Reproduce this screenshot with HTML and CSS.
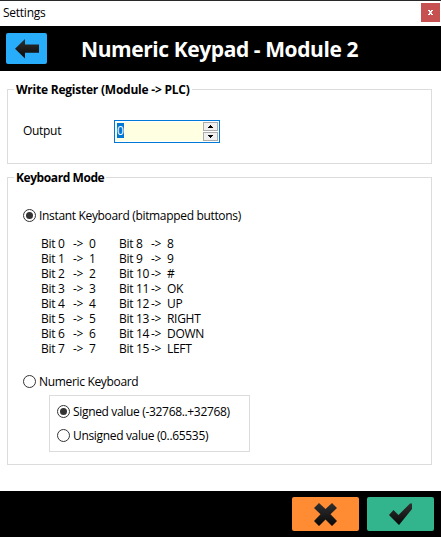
FILE: index.html
```html
<!DOCTYPE html>
<html lang="en">
<head>
<meta charset="utf-8">
<title>Settings</title>
<link rel="stylesheet" href="styles.css">
</head>
<body>
<div class="window">
  <div class="titlebar"><span class="caption">Settings</span><button class="close" aria-label="Close"><svg width="5" height="5" viewBox="0 0 5 5"><path d="M0 0h2v1h1V0h2v1H4v1H3.500v1H4v1h1v1H3V4H2v1H0V4h1V3h.5V2H1V1H0z" fill="#fff"/></svg></button></div>
  <header class="header">
    <button class="back" aria-label="Back"><svg width="41" height="31" viewBox="0 0 41 31"><defs><linearGradient id="ink" x1="0" y1="0" x2="0" y2="1"><stop offset="0" stop-color="#303030"/><stop offset="1" stop-color="#080808"/></linearGradient></defs><path d="M9 15.700L19 6v5.500h14v8.300H19v5.700z" fill="url(#ink)"/></svg></button>
    <h1 class="heading">Numeric Keypad - Module 2</h1>
  </header>
  <main class="content">
    <fieldset class="group register">
      <legend class="bold write">Write Register (Module -&gt; PLC)</legend>
      <div class="output">
        <span class="output-label">Output</span>
        <div class="spin">
          <div class="value"><span class="selected">0</span></div>
          <div class="arrows">
            <span class="step"><svg width="5" height="3" viewBox="0 0 5 3"><path d="M2 0h1v1h1v1h1v1H0V2h1V1h1z"/></svg></span>
            <span class="step"><svg width="5" height="3" viewBox="0 0 5 3"><path d="M0 0h5v1H4v1H3v1H2V2H1V1H0z"/></svg></span>
          </div>
        </div>
      </div>
    </fieldset>
    <fieldset class="group mode">
      <legend class="bold keyboard">Keyboard Mode</legend>
      <div class="option"><span class="radio on"></span><span class="instant">Instant Keyboard (bitmapped buttons)</span></div>
      <div class="bits">
        <span>Bit 0</span><span>-&gt;</span><span>0</span><span>Bit 8</span><span>-&gt;</span><span>8</span>
        <span>Bit 1</span><span>-&gt;</span><span>1</span><span>Bit 9</span><span>-&gt;</span><span>9</span>
        <span>Bit 2</span><span>-&gt;</span><span>2</span><span>Bit 10</span><span>-&gt;</span><span>#</span>
        <span>Bit 3</span><span>-&gt;</span><span>3</span><span>Bit 11</span><span>-&gt;</span><span>OK</span>
        <span>Bit 4</span><span>-&gt;</span><span>4</span><span>Bit 12</span><span>-&gt;</span><span>UP</span>
        <span>Bit 5</span><span>-&gt;</span><span>5</span><span>Bit 13</span><span>-&gt;</span><span>RIGHT</span>
        <span>Bit 6</span><span>-&gt;</span><span>6</span><span>Bit 14</span><span>-&gt;</span><span>DOWN</span>
        <span>Bit 7</span><span>-&gt;</span><span>7</span><span>Bit 15</span><span>-&gt;</span><span>LEFT</span>
      </div>
      <div class="option"><span class="radio"></span><span class="numeric">Numeric Keyboard</span></div>
      <div class="panel">
        <div class="option"><span class="radio on"></span><span class="signed">Signed value (-32768..+32768)</span></div>
        <div class="option"><span class="radio"></span><span class="unsigned">Unsigned value (0..65535)</span></div>
      </div>
    </fieldset>
  </main>
  <footer class="footer">
    <button class="action cancel" aria-label="Cancel"><svg width="67" height="34" viewBox="0 0 67 34"><path d="M27 6l6.500 6L40 6l5 5-6.500 6.300L45 24l-5 5-6.500-6.500L27 29l-5-5 6.500-6.700L22 11z" fill="url(#ink)"/></svg></button>
    <button class="action accept" aria-label="Accept"><svg width="67" height="34" viewBox="0 0 67 34"><path d="M22 18l4.500-5 5 5L43 6.500h2V12L32 28z" fill="url(#ink)"/></svg></button>
  </footer>
</div>
</body>
</html>
```
FILE: styles.css
```css
* { box-sizing: border-box; }
body { margin: 0; background: #fff; color: #000; font: 12px/15px "Open Sans", "Noto Sans", sans-serif; }
button { border: 0; padding: 0; margin: 0; }
svg { display: block; }
span { white-space: nowrap; }
.window { width: 441px; height: 537px; display: flex; flex-direction: column; background: #fff; border-top: 1px solid #2b2829; }
.titlebar { height: 25px; display: flex; justify-content: space-between; padding: 2px 1px 0 3px; }
.caption { padding-top: 2px; letter-spacing: -0.25px; }
.close { width: 19px; height: 19px; background: #c75050; display: flex; align-items: center; justify-content: center; }
.header { height: 45px; background: #000; display: flex; padding: 7px 6px; }
.back { width: 41px; height: 31px; background: #28adfb; border-radius: 2px; }
.heading { margin: 1px 0 0 34px; color: #fff; font-size: 21px; line-height: 30px; font-weight: 700; white-space: nowrap; letter-spacing: -0.42px; }
.content { flex: 1; padding: 11px 9px 0 7px; }
.group { margin: 0; min-width: 0; border: 1px solid #dcdcdc; padding: 0 15px; }
.register { height: 82px; margin-bottom: 6px; }
.mode { height: 295px; }
.group legend { height: 15px; margin-left: -9px; padding: 0 2px; white-space: nowrap; }
.bold { font-weight: 700; }
.write { letter-spacing: -0.23px; }
.keyboard { letter-spacing: -0.42px; }
.output { display: flex; align-items: center; height: 23px; margin-top: 23px; }
.output-label { width: 91px; letter-spacing: -0.3px; margin-top: -2px; }
.spin { width: 106px; height: 23px; border: 1px solid #0078d7; padding: 1px; display: flex; justify-content: space-between; background: #fff; }
.value { width: 87px; padding: 1px 0 0 1px; background: #ffffe1; }
.selected { display: block; width: 7px; height: 15px; background: #0078d7; color: #fff; }
.arrows { width: 15px; display: flex; flex-direction: column; gap: 1px; }
.step { height: 9px; border: 1px solid #acacac; background: #f0f0f0; display: flex; align-items: center; justify-content: center; }
.option { display: flex; align-items: center; gap: 3px; height: 15px; }
.mode > .option { margin-top: 23px; }
.radio { flex: none; width: 13px; height: 13px; border: 1px solid #333; border-radius: 50%; display: flex; align-items: center; justify-content: center; background: #fff; }
.radio.on::after { content: ""; width: 7px; height: 7px; border-radius: 50%; background: #333; }
.bits { display: grid; grid-template-columns: 32px 16px 30px 32px 16px auto; grid-auto-rows: 15px; margin: 13px 0 0 18px; letter-spacing: -0.3px; }
.mode > .bits + .option { margin-top: 18px; }
.panel { width: 201px; height: 57px; margin: 6px 0 0 26px; border: 1px solid #dcdcdc; padding: 8px 7px; display: flex; flex-direction: column; gap: 9px; }
.instant, .numeric, .signed, .unsigned { letter-spacing: -0.33px; }
.footer { height: 46px; background: #000; display: flex; justify-content: flex-end; gap: 8px; padding: 6px 7px; }
.action { width: 67px; height: 34px; border-radius: 2px; }
.cancel { background: #ff8c32; }
.accept { background: #32b48c; }
```
